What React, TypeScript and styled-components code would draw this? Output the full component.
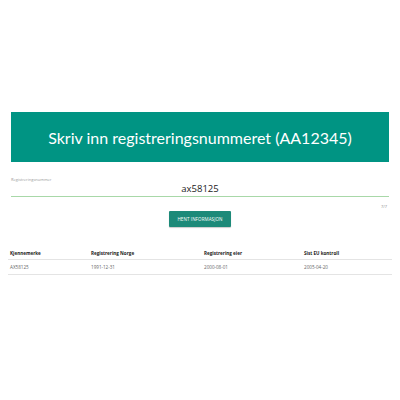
import React from "react";
import styled, { createGlobalStyle } from "styled-components";

const Global = createGlobalStyle`
  html, body { margin: 0; padding: 0; background: #fff; }
  body { font-family: "Open Sans", "Noto Sans", sans-serif; }
`;

const Page = styled.div`
  width: 400px;
  height: 400px;
  padding: 112px 11px 0;
  box-sizing: border-box;
  display: flex;
  flex-direction: column;
`;

const Banner = styled.div`
  background: #009483;
  height: 50px;
  display: flex;
  align-items: center;
  justify-content: center;
  color: #fff;
  font-family: Lato, "Open Sans", sans-serif;
  font-size: 16px;
  font-weight: 400;
  white-space: nowrap;
`;

const Field = styled.div`
  margin-top: 15px;
  display: flex;
  flex-direction: column;
`;

const Label = styled.div`
  font-size: 4px;
  color: #999;
  height: 5px;
  line-height: 5px;
`;

const Value = styled.div`
  text-align: center;
  font-size: 9.5px;
  color: #222;
  line-height: 12px;
  margin-top: 1px;
  padding-bottom: 1px;
  border-bottom: 1.5px solid #a8d8a8;
`;

const Counter = styled.div`
  text-align: right;
  font-size: 4px;
  color: #888;
  margin-top: 7px;
  margin-right: 2px;
`;

const ButtonRow = styled.div`
  display: flex;
  justify-content: center;
  margin-top: 2px;
`;

const Button = styled.button`
  background: #1d8a79;
  color: #fff;
  border: none;
  border-radius: 1px;
  width: 62px;
  height: 16px;
  font-family: inherit;
  font-size: 4.5px;
  letter-spacing: 0.1px;
  padding: 0;
  box-shadow: 0 1px 1px rgba(0, 0, 0, 0.2);
`;

const Table = styled.div`
  margin: 20px -3px 0;
  display: flex;
  flex-direction: column;
`;

const Row = styled.div<{ $head?: boolean }>`
  display: grid;
  grid-template-columns: 81px 113px 100px 1fr;
  padding: 0 2px;
  height: ${(p) => (p.$head ? "12px" : "14px")};
  align-items: center;
  border-bottom: 1px solid #e4e4e4;
  font-size: 4.6px;
  font-weight: ${(p) => (p.$head ? 700 : 400)};
  color: ${(p) => (p.$head ? "#222" : "#666")};
`;

export default function App() {
  return (
    <>
      <Global />
      <Page>
        <Banner>Skriv inn registreringsnummeret (AA12345)</Banner>
        <Field>
          <Label>Registreringsnummer</Label>
          <Value>ax58125</Value>
          <Counter>7/7</Counter>
        </Field>
        <ButtonRow>
          <Button>HENT INFORMASJON</Button>
        </ButtonRow>
        <Table>
          <Row $head>
            <span>Kjennemerke</span>
            <span>Registrering Norge</span>
            <span>Registrering eier</span>
            <span>Sist EU kontroll</span>
          </Row>
          <Row>
            <span>AX58125</span>
            <span>1991-12-31</span>
            <span>2000-08-01</span>
            <span>2005-04-20</span>
          </Row>
        </Table>
      </Page>
    </>
  );
}
